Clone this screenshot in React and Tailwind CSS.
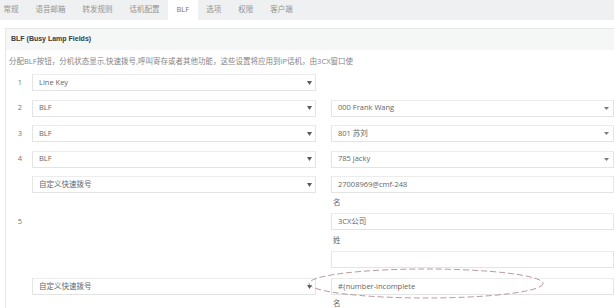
const font = { fontFamily: '"Open Sans", "Noto Sans CJK SC", sans-serif' };

const tabs = ['常规', '语音邮箱', '转发规则', '话机配置', 'BLF', '选项', '权限', '客户端'];

function Arrow({ big = true }) {
  return big ? (
    <svg width="5" height="4" viewBox="0 0 5 4" className="shrink-0">
      <path d="M0 0 H5 L2.5 4 Z" fill="#5a5a5a" />
    </svg>
  ) : (
    <svg width="5" height="3" viewBox="0 0 5 3" className="shrink-0">
      <path d="M0 0 H5 L2.5 3 Z" fill="#7a7a7a" />
    </svg>
  );
}

function Select({ text, big = true, arrowPad = 'pr-[4px]' }) {
  return (
    <div className={`h-[17px] flex items-center justify-between border border-[#e4e4e4] border-t-[#ececec] bg-white pl-[6px] ${arrowPad} text-[7.5px] text-[#666]`}>
      <span>{text}</span>
      <Arrow big={big} />
    </div>
  );
}

function Input({ text }) {
  return (
    <div className="h-[17px] flex items-center border border-[#e4e4e4] border-t-[#ececec] bg-white pl-[6px] text-[7.5px] text-[#666]">
      {text}
    </div>
  );
}

function Label({ text, h }) {
  return (
    <div className={`${h} flex items-center pl-[2px] text-[7.5px] text-[#666]`}>{text}</div>
  );
}

function Row({ num, left, right }) {
  return (
    <div className="flex h-[25.5px]">
      <div className="w-[26px] h-[17px] flex items-center justify-center pl-[2px] text-[7.5px] text-[#777]">{num}</div>
      <div className="w-[284px]">{left}</div>
      <div className="w-[15px]" />
      <div className="w-[283px]">{right}</div>
    </div>
  );
}

export default function App() {
  return (
    <div className="w-[614px] h-[308px] bg-white overflow-hidden relative" style={font}>
      <div className="h-[20px] bg-[#eef0f1] flex items-stretch ml-[-5px]">
        {tabs.map((t) => (
          <div
            key={t}
            className={`px-[8.5px] flex items-center text-[7.5px] ${t === 'BLF' ? 'bg-white text-[#777]' : 'text-[#949494]'}`}
          >
            {t}
          </div>
        ))}
      </div>

      <div className="mt-[8px] ml-[5px] border-l border-t border-[#e8e8e8]">
        <div className="h-[21px] bg-[#f5f6f6] flex items-center pl-[5px] text-[7px] font-bold text-[#3a3a3a]" style={{ fontFamily: '"Liberation Sans", sans-serif' }}>
          BLF (Busy Lamp Fields)
        </div>
        <div className="pt-[6px] pl-[3px] h-[17px] text-[7.5px] text-[#858585] leading-[10px]">
          分配BLF按钮，分机状态显示,快速拨号,呼叫寄存或者其他功能，这些设置将应用到IP话机，由3CX窗口使
        </div>

        <div className="mt-[7px]">
          <Row num="1" left={<Select text="Line Key" arrowPad="pr-[3px]" />} right={null} />
          <Row num="2" left={<Select text="BLF" arrowPad="pr-[3px]" />} right={<Select text="000 Frank Wang" big={false} arrowPad="pr-[4px]" />} />
          <Row num="3" left={<Select text="BLF" arrowPad="pr-[3px]" />} right={<Select text="801 苏刘" big={false} arrowPad="pr-[4px]" />} />
          <Row num="4" left={<Select text="BLF" arrowPad="pr-[3px]" />} right={<Select text="785 jacky" big={false} arrowPad="pr-[4px]" />} />

          <div className="flex">
            <div className="w-[26px] h-[92px] flex items-center justify-center pl-[2px] text-[7.5px] text-[#777]">5</div>
            <div className="w-[284px]">
              <Select text="自定义快速拨号" arrowPad="pr-[3px]" />
            </div>
            <div className="w-[15px]" />
            <div className="w-[283px]">
              <Input text="27008969@cmf-248" />
              <Label text="名" h="h-[20px]" />
              <Input text="3CX公司" />
              <Label text="姓" h="h-[21px]" />
              <Input text="" />
            </div>
          </div>

          <div className="flex mt-[10px]">
            <div className="w-[26px]" />
            <div className="w-[284px]">
              <Select text="自定义快速拨号" arrowPad="pr-[3px]" />
            </div>
            <div className="w-[15px]" />
            <div className="w-[283px]">
              <Input text="#{number-incomplete" />
              <Label text="名" h="h-[17px]" />
            </div>
          </div>
        </div>
      </div>

      <svg className="absolute left-[307px] top-[267px] pointer-events-none" width="238" height="33" viewBox="0 0 238 33">
        <ellipse cx="119" cy="16.5" rx="117" ry="14.5" fill="none" stroke="#a87d80" strokeWidth="0.8" strokeDasharray="6 3" />
      </svg>
    </div>
  );
}
